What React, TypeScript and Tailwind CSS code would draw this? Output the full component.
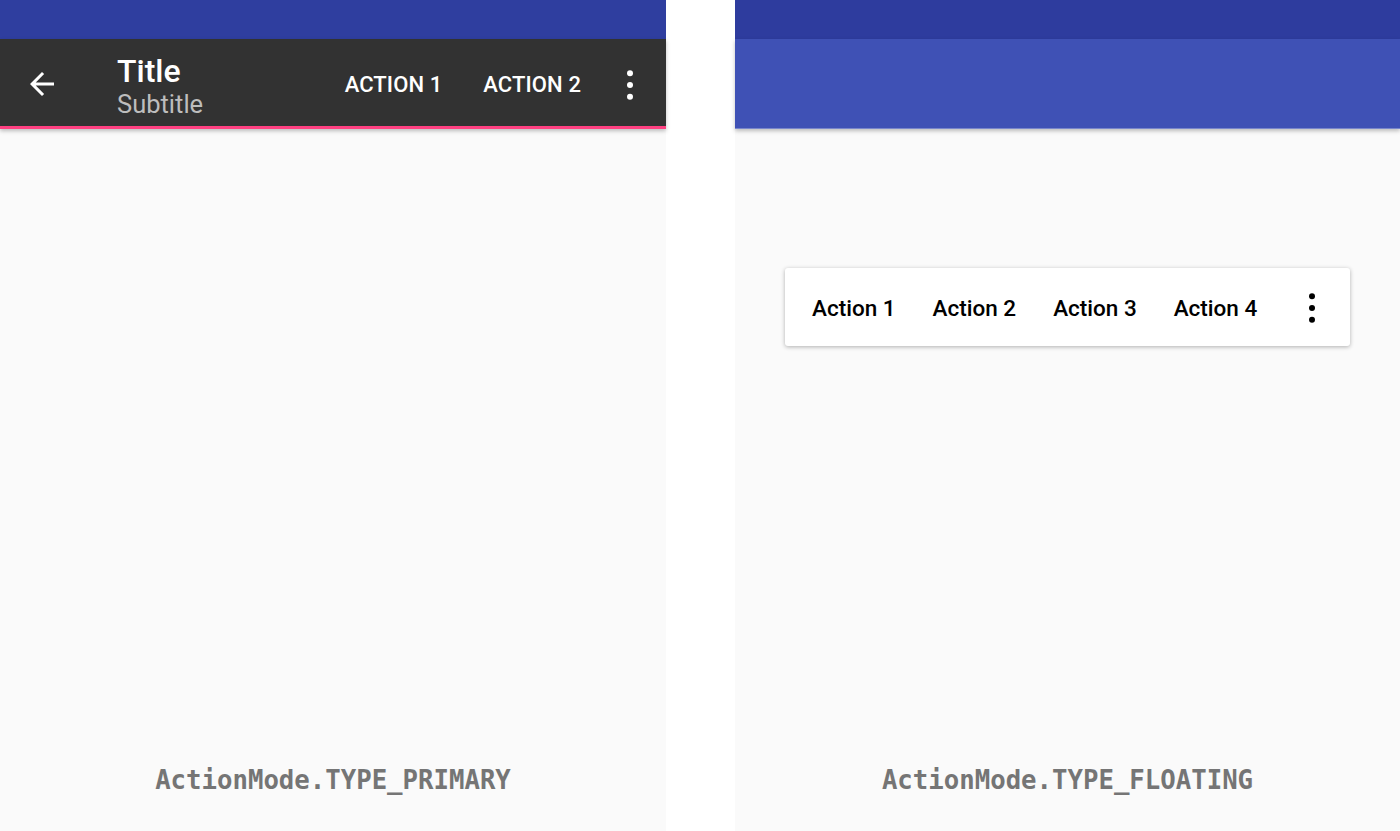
import React from 'react';

function BackArrow() {
  return (
    <svg width="36" height="36" viewBox="0 0 24 24" fill="#ffffff" aria-hidden="true">
      <path d="M20 11H7.83l5.59-5.59L12 4l-8 8 8 8 1.41-1.41L7.83 13H20v-2z" />
    </svg>
  );
}

function Overflow({ color }: { color: string }) {
  return (
    <svg width="36" height="36" viewBox="0 0 24 24" fill={color} aria-hidden="true">
      <circle cx="12" cy="4.2" r="2" />
      <circle cx="12" cy="12" r="2" />
      <circle cx="12" cy="19.8" r="2" />
    </svg>
  );
}

function Label({ text }: { text: string }) {
  return (
    <div className="flex-1 flex items-end justify-center pb-[37px]">
      <span className="text-[25.7px] font-bold text-[#757575] leading-none" style={{ fontFamily: '"DejaVu Sans Mono", "Liberation Mono", monospace' }}>
        {text}
      </span>
    </div>
  );
}

function PrimaryPanel() {
  return (
    <div className="w-[666px] h-[831px] flex flex-col bg-[#fafafa]">
      <div className="h-[39px] bg-[#2f3e9f]" />
      <div className="relative z-10 shadow-[0_2px_4px_rgba(0,0,0,0.25)]">
        <div className="h-[87px] bg-[#323232] flex items-center text-white">
          <div className="w-[84px] pl-[24px] pt-[2px] flex items-center">
            <BackArrow />
          </div>
          <div className="ml-[33px] pt-[8px] flex flex-col justify-center">
            <span className="text-[32px] font-medium leading-[34px]">Title</span>
            <span className="text-[25.5px] leading-[30px] text-[#bdbdbd] mt-[1px]">Subtitle</span>
          </div>
          <div className="ml-auto pt-[4px] flex items-center">
            <span className="text-[22px] font-medium tracking-[0.1px] mr-[41px]">ACTION 1</span>
            <span className="text-[22px] font-medium tracking-[0.1px] mr-[31px]">ACTION 2</span>
            <div className="pr-[18px] flex items-center">
              <Overflow color="#ffffff" />
            </div>
          </div>
        </div>
        <div className="h-[3px] bg-[#ff4081]" />
      </div>
      <Label text="ActionMode.TYPE_PRIMARY" />
    </div>
  );
}

function FloatingPanel() {
  return (
    <div className="w-[665px] h-[831px] flex flex-col bg-[#fafafa]">
      <div className="h-[39px] bg-[#2e3c9e]" />
      <div className="relative z-10 h-[90px] bg-[#3f51b5] border-b border-[#7986cb] shadow-[0_2px_4px_rgba(0,0,0,0.25)]" />
      <div className="mt-[139px] mx-[50px] h-[78px] bg-white rounded-[3px] shadow-[0_1px_4px_rgba(0,0,0,0.3)] flex items-center pl-[27px] pr-[14px] text-black">
        <div className="flex items-center gap-[37px] pt-[3px]">
          <span className="text-[22.5px] font-medium">Action 1</span>
          <span className="text-[22.5px] font-medium">Action 2</span>
          <span className="text-[22.5px] font-medium">Action 3</span>
          <span className="text-[22.5px] font-medium">Action 4</span>
        </div>
        <div className="ml-auto w-[48px] flex justify-center pt-[1px]">
          <Overflow color="#000000" />
        </div>
      </div>
      <Label text="ActionMode.TYPE_FLOATING" />
    </div>
  );
}

export default function App() {
  return (
    <div className="w-[1400px] h-[831px] bg-white flex overflow-hidden" style={{ fontFamily: 'Roboto, "Noto Sans", sans-serif' }}>
      <PrimaryPanel />
      <div className="w-[69px]" />
      <FloatingPanel />
    </div>
  );
}
